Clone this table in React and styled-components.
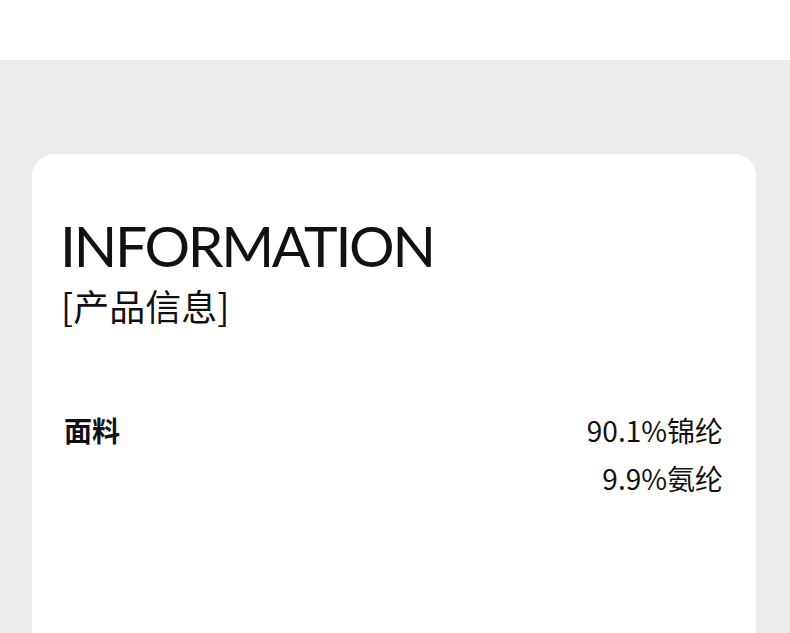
import React from "react";
import styled, { createGlobalStyle } from "styled-components";

const Global = createGlobalStyle`
  html, body { margin: 0; padding: 0; background: #ffffff; }
  body { font-family: "Noto Sans", "Noto Sans CJK SC", sans-serif; color: #111; }
`;

const Page = styled.div`
  width: 790px;
  height: 633px;
  overflow: hidden;
  background: #ffffff;
  display: flex;
  flex-direction: column;
`;

const Top = styled.div`
  height: 60px;
  flex: none;
  background: #ffffff;
`;

const Section = styled.div`
  flex: 1;
  background: #ececec;
  padding: 94px 34px 0 32px;
  overflow: hidden;
`;

const Card = styled.div`
  background: #ffffff;
  border-radius: 22px 22px 0 0;
  height: 600px;
  padding: 59px 33px 0 28px;
  box-sizing: border-box;
`;

const Title = styled.h1`
  margin: 0;
  font-family: "Lato", "Noto Sans", sans-serif;
  font-weight: 400;
  font-size: 57px;
  line-height: 64px;
  letter-spacing: -2.3px;
  color: #111;
`;

const Subtitle = styled.div`
  font-family: "Noto Sans CJK SC", sans-serif;
  font-size: 36px;
  line-height: 44px;
  margin-top: 6px;
  margin-left: 1px;
  color: #111;
`;

const Row = styled.div`
  margin-top: 79px;
  display: flex;
  justify-content: space-between;
  align-items: flex-start;
  padding-left: 4px;
`;

const Label = styled.div`
  font-family: "Noto Sans CJK SC", sans-serif;
  font-weight: 700;
  font-size: 28px;
  line-height: 48px;
  color: #111;
`;

const Values = styled.div`
  display: flex;
  flex-direction: column;
  align-items: flex-end;
`;

const Value = styled.div`
  font-family: "Noto Sans CJK SC", sans-serif;
  font-size: 28px;
  line-height: 48px;
  color: #111;
`;

export default function App() {
  return (
    <Page>
      <Global />
      <Top />
      <Section>
        <Card>
          <Title>INFORMATION</Title>
          <Subtitle>[产品信息]</Subtitle>
          <Row>
            <Label>面料</Label>
            <Values>
              <Value>90.1%锦纶</Value>
              <Value>9.9%氨纶</Value>
            </Values>
          </Row>
        </Card>
      </Section>
    </Page>
  );
}
